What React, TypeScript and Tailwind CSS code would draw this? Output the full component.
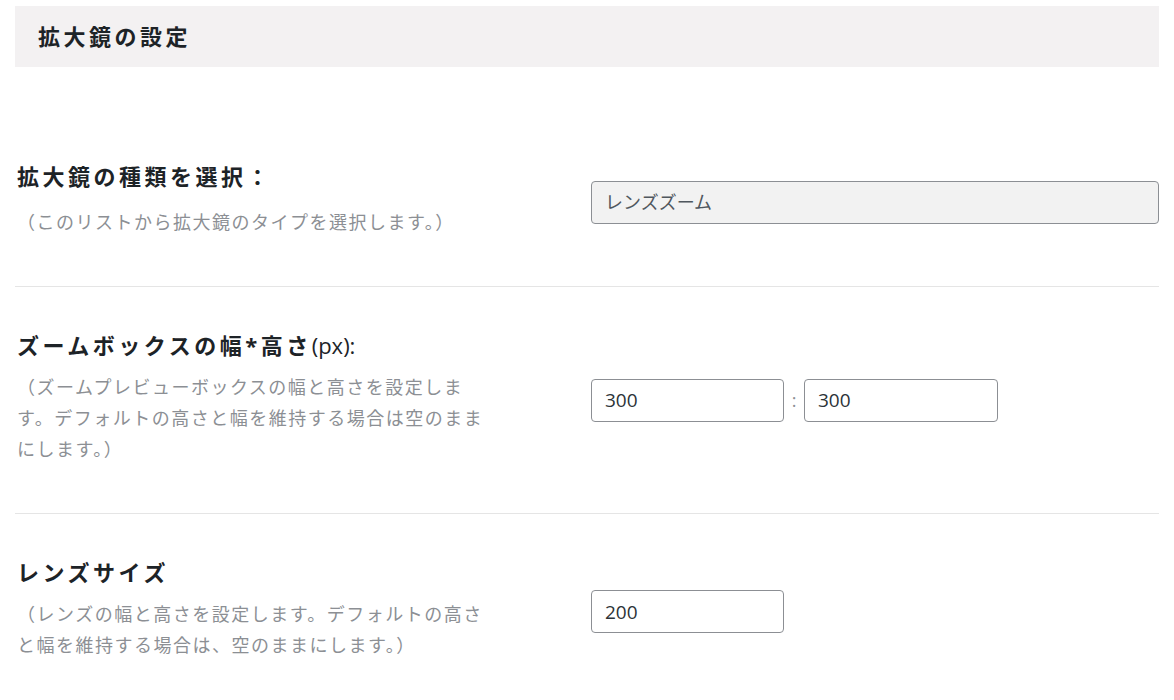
import React from 'react';

const font = { fontFamily: '"Open Sans", "Noto Sans CJK JP", sans-serif' };

const Row = ({
  label,
  desc,
  descGap = 'mt-[12px]',
  children,
}: {
  label: React.ReactNode;
  desc: React.ReactNode;
  descGap?: string;
  children: React.ReactNode;
}) => (
  <div className="flex items-center">
    <div className="w-[576px] shrink-0 pl-[2px] pt-[43px] pb-[48px]">
      <h3 className="text-[22px] leading-[30px] font-bold tracking-[3.5px] text-[#1d2327]">{label}</h3>
      <p className={`${descGap} w-[478px] text-[18px] leading-[31px] tracking-[1.5px] text-[#8c8f94]`}>{desc}</p>
    </div>
    <div className="flex-1">{children}</div>
  </div>
);

const inputCls =
  'h-[43px] rounded-[4px] border-[1.5px] border-[#8c8f94] bg-white px-[13px] text-[19px] text-[#2c3338] outline-none';

export default function App() {
  return (
    <div className="min-h-screen bg-white px-[15px] pt-[6px]" style={font}>
      <div className="flex h-[61px] items-center bg-[#f3f1f2] pl-[23px]">
        <h2 className="text-[22px] font-bold tracking-[3.5px] text-[#1d2327]">拡大鏡の設定</h2>
      </div>

      <div className="mt-[51px]">
        <Row label="拡大鏡の種類を選択：" desc="（このリストから拡大鏡のタイプを選択します。）" descGap="mt-[16px]">
          <div className="flex h-[43px] w-full items-center rounded-[4px] border-[1.5px] border-[#8c8f94] bg-[#f2f2f2] px-[13px] text-[18px] text-[#50575e]">
            レンズズーム
          </div>
        </Row>
      </div>

      <div className="h-px bg-[#e5e5e5]" />

      <Row
        label={
          <>
            ズームボックスの幅*高さ<span className="font-normal tracking-normal">(px):</span>
          </>
        }
        desc="（ズームプレビューボックスの幅と高さを設定します。デフォルトの高さと幅を維持する場合は空のままにします。）"
      >
        <div className="flex items-center">
          <input className={`${inputCls} w-[193px]`} defaultValue="300" />
          <span className="w-[20px] text-center text-[18px] text-[#8c8f94]">:</span>
          <input className={`${inputCls} w-[194px]`} defaultValue="300" />
        </div>
      </Row>

      <div className="h-px bg-[#e5e5e5]" />

      <Row
        label="レンズサイズ"
        desc="（レンズの幅と高さを設定します。デフォルトの高さと幅を維持する場合は、空のままにします。）"
      >
        <input className={`${inputCls} w-[193px]`} defaultValue="200" />
      </Row>
    </div>
  );
}
